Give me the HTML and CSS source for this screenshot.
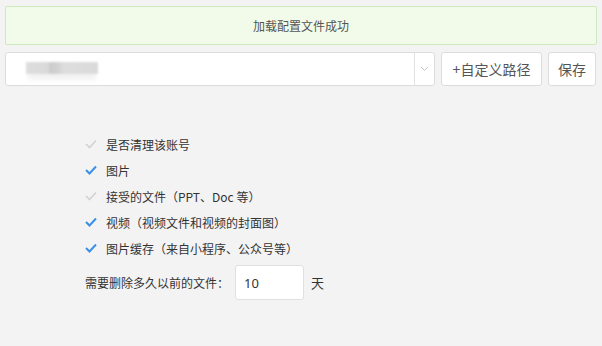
FILE: index.html
```html
<!DOCTYPE html>
<html>
<head>
    <meta charset="utf-8">
    <title>清理设置</title>
    <link rel="stylesheet" href="styles.css">
</head>
<body>
    <div class="alert">加载配置文件成功</div>

    <div class="toolbar">
        <div class="select">
            <div class="select-value">
                <span class="blur-text"></span>
            </div>
            <div class="select-arrow">
                <svg width="9" height="6" viewBox="0 0 9 6"><polyline points="1,1 4.5,4.5 8,1" fill="none" stroke="#c4c4c4" stroke-width="1"/></svg>
            </div>
        </div>
        <button class="btn btn-path">+自定义路径</button>
        <button class="btn btn-save">保存</button>
    </div>

    <div class="options">
        <div class="option">
            <svg class="check" width="12" height="10" viewBox="0 0 12 10"><polyline points="1,5 4.5,8.5 11,1.5" fill="none" stroke="#d2d2d2" stroke-width="1.6"/></svg>
            <span>是否清理该账号</span>
        </div>
        <div class="option">
            <svg class="check" width="12" height="10" viewBox="0 0 12 10"><polyline points="1,5 4.5,8.5 11,1.5" fill="none" stroke="#3b8fe8" stroke-width="2"/></svg>
            <span>图片</span>
        </div>
        <div class="option">
            <svg class="check" width="12" height="10" viewBox="0 0 12 10"><polyline points="1,5 4.5,8.5 11,1.5" fill="none" stroke="#d2d2d2" stroke-width="1.6"/></svg>
            <span>接受的文件（PPT、Doc 等）</span>
        </div>
        <div class="option">
            <svg class="check" width="12" height="10" viewBox="0 0 12 10"><polyline points="1,5 4.5,8.5 11,1.5" fill="none" stroke="#3b8fe8" stroke-width="2"/></svg>
            <span>视频（视频文件和视频的封面图）</span>
        </div>
        <div class="option">
            <svg class="check" width="12" height="10" viewBox="0 0 12 10"><polyline points="1,5 4.5,8.5 11,1.5" fill="none" stroke="#3b8fe8" stroke-width="2"/></svg>
            <span>图片缓存（来自小程序、公众号等）</span>
        </div>

        <div class="days-row">
            <label for="days">需要删除多久以前的文件：</label>
            <input type="text" id="days" value="10">
            <span class="unit">天</span>
        </div>
    </div>
</body>
</html>
```

FILE: styles.css
```css
body {
    margin: 0;
    padding: 6px 5px;
    background-color: #f3f3f3;
    color: #333333;
    font-family: "Noto Sans CJK SC", "Noto Sans", sans-serif;
    font-size: 12px;
}

.alert {
    height: 37px;
    line-height: 37px;
    border: 1px solid #cfe9bf;
    border-radius: 2px;
    background-color: #f2fbe9;
    color: #555555;
    text-align: center;
}

.toolbar {
    display: flex;
    gap: 6px;
    margin-top: 7px;
    height: 34px;
}

.select {
    width: 430px;
    display: flex;
    background-color: #ffffff;
    border: 1px solid #dcdcdc;
    border-radius: 3px;
    box-sizing: border-box;
}

.select-value {
    flex: 1;
    padding: 9px 0 0 20px;
}

.blur-text {
    display: block;
    width: 72px;
    height: 12px;
    background: linear-gradient(90deg, #dddddd 0, #dadada 22px, #cccccc 24px, #d2d2d2 32px, #dedede 38px, #dadada 72px);
    filter: blur(1px);
    box-shadow: 0 8px 4px -2px #f2f2f2;
}

.select-arrow {
    width: 19px;
    border-left: 1px solid #e2e2e2;
    display: flex;
    align-items: center;
    justify-content: center;
}

.btn {
    background-color: #ffffff;
    border: 1px solid #dcdcdc;
    border-radius: 3px;
    color: #555555;
    font-family: "Noto Sans CJK SC", sans-serif;
    font-size: 14px;
    padding: 0;
    box-sizing: border-box;
}

.btn-path {
    width: 101px;
}

.btn-save {
    width: 48px;
}

.options {
    margin-top: 45px;
    padding-left: 80px;
}

.option {
    display: flex;
    align-items: center;
    height: 26px;
}

.check {
    margin-right: 9px;
}

.days-row {
    display: flex;
    align-items: center;
    margin-top: 4px;
}

.days-row input {
    width: 69px;
    height: 35px;
    box-sizing: border-box;
    margin-left: 6px;
    padding: 0 8px;
    border: 1px solid #e0e0e0;
    border-radius: 3px;
    background-color: #ffffff;
    color: #333333;
    font-family: "Noto Sans", sans-serif;
    font-size: 13px;
    outline: none;
}

.unit {
    margin-left: 7px;
    font-size: 13px;
}
```
